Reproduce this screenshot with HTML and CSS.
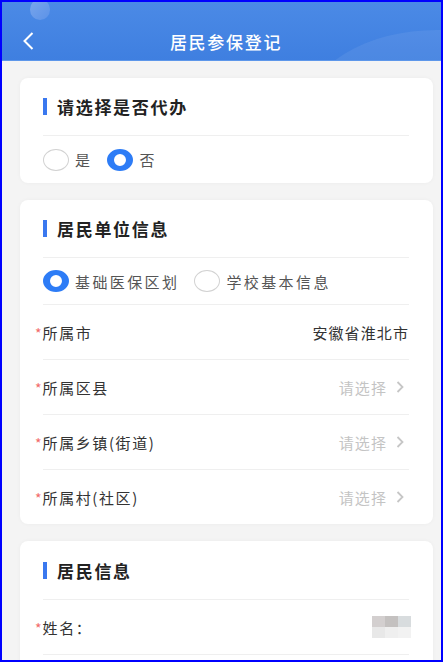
FILE: index.html
```html
<!DOCTYPE html>
<html lang="zh-CN">
<head>
<meta charset="UTF-8">
<meta name="viewport" content="width=device-width, initial-scale=1.0">
<title>居民参保登记</title>
<link rel="stylesheet" href="styles.css">
</head>
<body>
  <div class="screen">
    <header class="nav">
      <span class="nav-dot"></span>
      <span class="nav-arc"></span>
      <a class="nav-back" href="#">
        <svg width="12" height="18" viewBox="0 0 12 18"><path d="M10.5 1 2.5 9l8 8" fill="none" stroke="#fff" stroke-width="2"/></svg>
      </a>
      <h1 class="nav-title">居民参保登记</h1>
    </header>

    <main class="content">
      <!-- 是否代办 -->
      <section class="card">
        <h2 class="card-title">请选择是否代办</h2>
        <div class="radio-row">
          <label class="radio"><span class="radio-dot"></span>是</label>
          <label class="radio"><span class="radio-dot is-on"></span>否</label>
        </div>
      </section>

      <!-- 单位信息 -->
      <section class="card">
        <h2 class="card-title">居民单位信息</h2>
        <div class="radio-row">
          <label class="radio"><span class="radio-dot is-on"></span>基础医保区划</label>
          <label class="radio"><span class="radio-dot"></span>学校基本信息</label>
        </div>
        <div class="field">
          <span class="field-label"><i class="req">*</i>所属市</span>
          <span class="field-value">安徽省淮北市</span>
        </div>
        <div class="field">
          <span class="field-label"><i class="req">*</i>所属区县</span>
          <span class="field-value is-empty">请选择<svg class="arrow" width="8" height="12" viewBox="0 0 8 12"><path d="M1.5 1 6.5 6l-5 5" fill="none" stroke="#c6c6c6" stroke-width="1.8"/></svg></span>
        </div>
        <div class="field">
          <span class="field-label"><i class="req">*</i>所属乡镇(街道)</span>
          <span class="field-value is-empty">请选择<svg class="arrow" width="8" height="12" viewBox="0 0 8 12"><path d="M1.5 1 6.5 6l-5 5" fill="none" stroke="#c6c6c6" stroke-width="1.8"/></svg></span>
        </div>
        <div class="field">
          <span class="field-label"><i class="req">*</i>所属村(社区)</span>
          <span class="field-value is-empty">请选择<svg class="arrow" width="8" height="12" viewBox="0 0 8 12"><path d="M1.5 1 6.5 6l-5 5" fill="none" stroke="#c6c6c6" stroke-width="1.8"/></svg></span>
        </div>
      </section>

      <!-- 居民信息 -->
      <section class="card">
        <h2 class="card-title">居民信息</h2>
        <div class="field">
          <span class="field-label"><i class="req">*</i>姓名：</span>
          <span class="mosaic">
            <i style="background:#d3cfcf"></i><i style="background:#c4c1c0"></i><i style="background:#d8dcde"></i>
            <i style="background:#e8e8e8"></i><i style="background:#efefef"></i><i style="background:#f2f2f2"></i>
          </span>
        </div>
        <div class="field"></div>
      </section>
    </main>
  </div>
</body>
</html>
```

FILE: styles.css
```css
body {
  margin: 0;
  font-family: "Noto Sans CJK SC", "Noto Sans", sans-serif;
}

.screen {
  width: 443px;
  height: 662px;
  box-sizing: border-box;
  border: 2px solid #0000ff;
  background: #f4f4f4;
  overflow: hidden;
}

/* 顶部导航 */
.nav {
  position: relative;
  display: grid;
  grid-template-columns: 1fr auto 1fr;
  align-items: center;
  height: 59px;
  box-sizing: border-box;
  padding: 20px 0 0 9px;
  background: linear-gradient(180deg, #4b8ae6 0%, #3f7fe0 100%);
  border-bottom: 1px solid #5d97ea;
  overflow: hidden;
}
.nav-dot {
  position: absolute;
  left: 28px;
  top: -3px;
  width: 20px;
  height: 21px;
  border-radius: 50%;
  background: linear-gradient(135deg, #7aa6ec, #5b92e8);
}
.nav-arc {
  position: absolute;
  left: 305px;
  top: 28px;
  width: 260px;
  height: 160px;
  border-radius: 50%;
  background: rgba(255, 255, 255, 0.07);
}
.nav-back {
  position: relative;
  display: flex;
  margin-left: 11px;
}
.nav-title {
  position: relative;
  margin: 0;
  font-size: 17px;
  font-weight: 500;
  letter-spacing: 1.7px;
  color: #fff;
}

/* 内容 */
.content {
  display: flex;
  flex-direction: column;
  gap: 17px;
  padding: 17px 8px 0 18px;
}
.card {
  background: #fff;
  border-radius: 8px;
  padding: 0 24px 0 23px;
  box-shadow: 0 0 4px rgba(0, 0, 0, 0.04);
}
.card-title {
  display: flex;
  align-items: center;
  gap: 10px;
  height: 57px;
  margin: 0;
  border-bottom: 1px solid #efefef;
  font-size: 17px;
  font-weight: bold;
  letter-spacing: 1.7px;
  color: #222;
}
.card-title::before {
  content: "";
  width: 4px;
  height: 17px;
  background: #3a78ef;
}
.card:last-child .card-title {
  height: 58px;
}

.radio-row {
  display: flex;
  align-items: center;
  gap: 15px;
  height: 46px;
}
.card:first-child .radio-row {
  height: 47px;
}
.card .radio-row + .field {
  border-top: 1px solid #efefef;
}
.radio {
  display: flex;
  align-items: center;
  gap: 6px;
  font-size: 15px;
  letter-spacing: 2.4px;
  color: #555;
}
.radio-dot {
  width: 26px;
  height: 22px;
  box-sizing: border-box;
  border: 1px solid #d2d2d2;
  border-radius: 50%;
}
.radio-dot.is-on {
  border-color: #2d7cf6;
  border-width: 5px 7px;
}

.field {
  display: flex;
  align-items: center;
  justify-content: space-between;
  height: 54px;
  font-size: 15px;
  letter-spacing: 1.6px;
  color: #333;
}
.field + .field {
  border-top: 1px solid #efefef;
}
.req {
  margin-left: -8px;
  margin-right: 1px;
  font-style: normal;
  font-size: 14px;
  letter-spacing: 0;
  color: #f26a6a;
}
.field-value {
  display: flex;
  align-items: center;
  letter-spacing: 1.1px;
}
.field-value.is-empty {
  color: #c4c4c4;
  margin-right: 5px;
}
.arrow {
  margin-left: 9px;
}

.mosaic {
  display: grid;
  grid-template-columns: repeat(3, 13px);
  grid-template-rows: 11px 11px;
  margin-right: -2px;
}
.mosaic i {
  display: block;
}
```
